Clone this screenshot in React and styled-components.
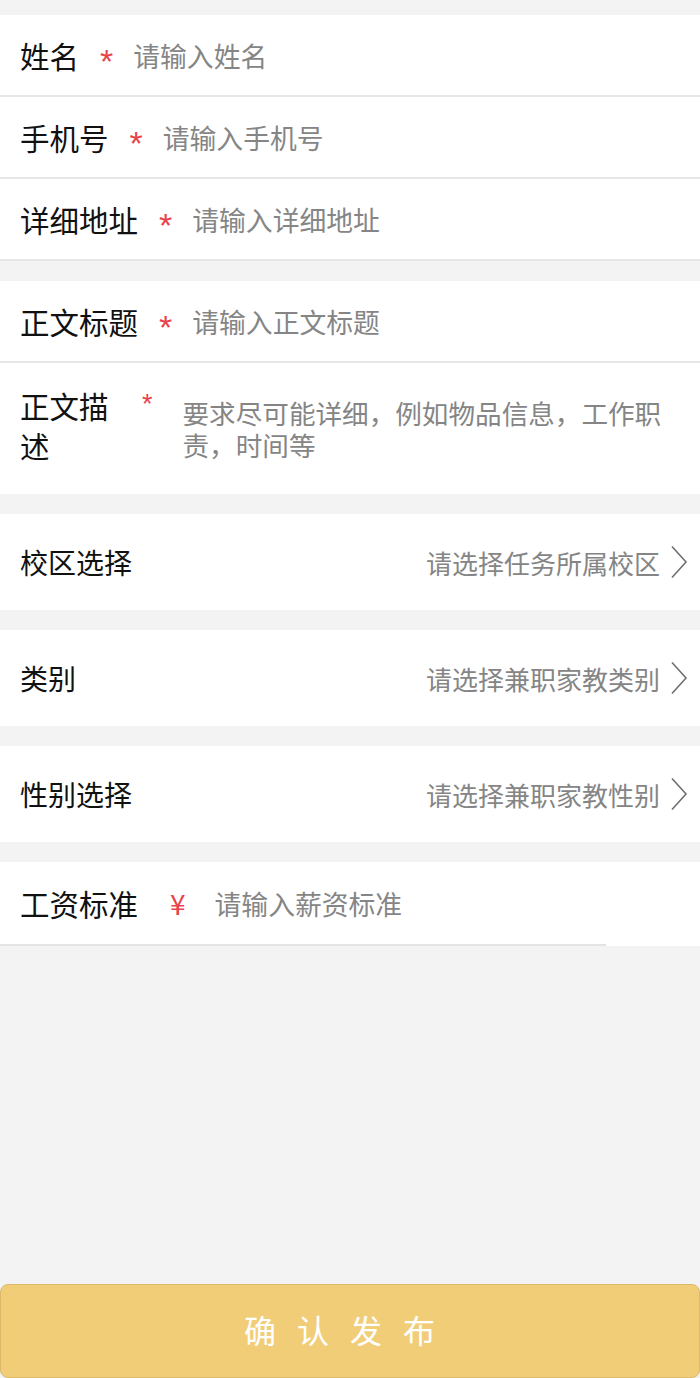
import React from 'react';
import styled, { createGlobalStyle } from 'styled-components';

const GlobalStyle = createGlobalStyle`
  html, body {
    margin: 0;
    padding: 0;
    background: #f3f3f3;
  }
  * { box-sizing: border-box; }
  body {
    font-family: "Noto Sans CJK SC", "Noto Sans", sans-serif;
  }
`;

const Page = styled.div`
  display: flex;
  flex-direction: column;
  min-height: 100vh;
  width: 700px;
  padding-top: 15px;
  background: #f3f3f3;
`;

const Section = styled.div`
  background: #fff;
  margin-bottom: 20px;
`;

const Row = styled.div`
  display: flex;
  align-items: center;
  height: 82px;
  padding: 0 20px;
  border-bottom: 2px solid #e6e6e6;
`;

const Label = styled.span`
  font-size: ${(p) => (p.small ? '28px' : '29.5px')};
  color: #111;
  white-space: nowrap;
`;

const Star = styled.span`
  font-family: "Liberation Sans", sans-serif;
  font-size: 34px;
  line-height: 1;
  color: #e8434c;
  margin: 12px 20px 0 21px;
`;

const Field = styled.input`
  flex: 1;
  min-width: 0;
  border: none;
  outline: none;
  background: transparent;
  padding: 0;
  font-family: inherit;
  font-size: 26.8px;
  color: #333;

  &::placeholder {
    color: #858585;
  }
`;

const DescRow = styled.div`
  display: flex;
  align-items: flex-start;
  height: 131px;
  padding: 22px 20px 0 20px;
`;

const DescLabel = styled.span`
  width: 100px;
  font-size: 29.5px;
  line-height: 40px;
  color: #111;
`;

const SmallStar = styled.span`
  font-family: "Liberation Sans", sans-serif;
  font-size: 27px;
  line-height: 1;
  color: #e8434c;
  margin: 6px 0 0 22px;
`;

const DescField = styled.textarea`
  flex: 1;
  height: 80px;
  margin: 12px 0 0 30px;
  border: none;
  outline: none;
  resize: none;
  background: transparent;
  padding: 0;
  font-family: inherit;
  font-size: 26.6px;
  line-height: 32px;
  color: #333;
  overflow: hidden;

  &::placeholder {
    color: #858585;
  }
`;

const PickRow = styled.div`
  display: flex;
  align-items: center;
  justify-content: space-between;
  height: 96px;
  padding: 0 12px 0 20px;
  background: #fff;
  margin-bottom: 20px;
`;

const PickValue = styled.span`
  display: flex;
  align-items: center;
  gap: 10px;
  font-size: 26px;
  color: #858585;
`;

const SalaryRow = styled.div`
  background: #fff;
  display: flex;
  flex-direction: column;
`;

const SalaryLine = styled.div`
  display: flex;
  align-items: center;
  height: 82px;
  padding: 0 20px;
`;

const Yen = styled.span`
  font-size: 28px;
  color: #e8434c;
  margin: 0 29px 0 32px;
`;

const Rule = styled.div`
  width: 606px;
  height: 2px;
  background: #e4e4e4;
`;

const Submit = styled.button`
  margin-top: auto;
  width: 700px;
  height: 94px;
  border: 1px solid #dcb86a;
  border-radius: 8px;
  background: #f1cd78;
  color: #fff;
  font-family: inherit;
  font-size: 32px;
  letter-spacing: 21px;
  padding: 0 0 4px 0;
  cursor: pointer;
`;

const Chevron = () => (
  <svg width="18" height="34" viewBox="0 0 18 34" fill="none">
    <path d="M2 1.5 L16 17 L2 32.5" stroke="#6f6f6f" strokeWidth="1.6" />
  </svg>
);

const picks = [
  { label: '校区选择', value: '请选择任务所属校区' },
  { label: '类别', value: '请选择兼职家教类别' },
  { label: '性别选择', value: '请选择兼职家教性别' },
];

export default function App() {
  return (
    <>
      <GlobalStyle />
      <Page>
        <Section>
          <Row>
            <Label>姓名</Label>
            <Star>*</Star>
            <Field placeholder="请输入姓名" />
          </Row>
          <Row>
            <Label>手机号</Label>
            <Star>*</Star>
            <Field placeholder="请输入手机号" />
          </Row>
          <Row>
            <Label>详细地址</Label>
            <Star>*</Star>
            <Field placeholder="请输入详细地址" />
          </Row>
        </Section>

        <Section>
          <Row>
            <Label>正文标题</Label>
            <Star>*</Star>
            <Field placeholder="请输入正文标题" />
          </Row>
          <DescRow>
            <DescLabel>正文描述</DescLabel>
            <SmallStar>*</SmallStar>
            <DescField placeholder="要求尽可能详细，例如物品信息，工作职责，时间等" />
          </DescRow>
        </Section>

        {picks.map((p) => (
          <PickRow key={p.label}>
            <Label small>{p.label}</Label>
            <PickValue>
              {p.value}
              <Chevron />
            </PickValue>
          </PickRow>
        ))}

        <SalaryRow>
          <SalaryLine>
            <Label>工资标准</Label>
            <Yen>¥</Yen>
            <Field placeholder="请输入薪资标准" />
          </SalaryLine>
          <Rule />
        </SalaryRow>

        <Submit>确认发布</Submit>
      </Page>
    </>
  );
}
